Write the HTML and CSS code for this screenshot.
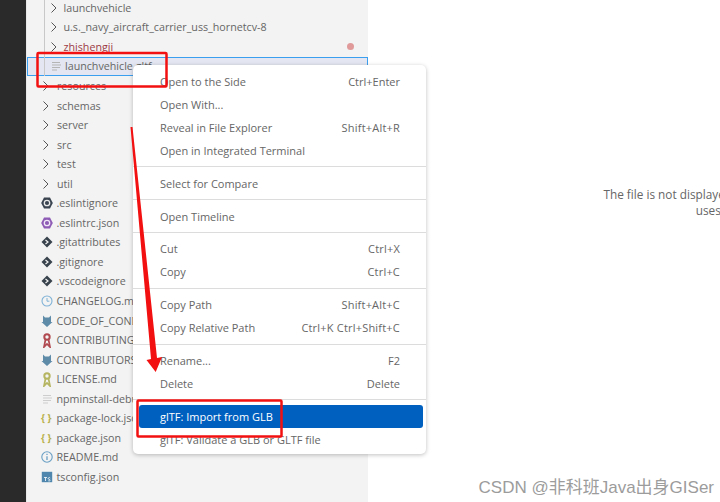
FILE: index.html
```html
<!DOCTYPE html>
<html lang="en">
<head>
<meta charset="utf-8">
<title>Explorer context menu</title>
<link rel="stylesheet" href="styles.css">
</head>
<body>
<div class="app">
  <div class="activity"></div>
  <aside class="side">
    <ul class="tree">
      <li class="row l2"><svg class="chev" viewBox="0 0 10 10"><path d="M2.500 .5l4.500 4.500-4.500 4.500"/></svg>launchvehicle</li>
      <li class="row l2"><svg class="chev" viewBox="0 0 10 10"><path d="M2.500 .5l4.500 4.500-4.500 4.500"/></svg>u.s._navy_aircraft_carrier_uss_hornetcv-8</li>
      <li class="row l2 err"><svg class="chev" viewBox="0 0 10 10"><path d="M2.500 .5l4.500 4.500-4.500 4.500"/></svg>zhishengji<span class="dot"></span></li>
      <li class="row l2 sel"><svg class="ic" viewBox="0 0 12 12"><path d="M1 2.500h8M1 5h9M1 7.500h8M1 10h5" stroke="#b5b5b5" fill="none"/></svg>launchvehicle.gltf</li>
      <li class="row"><svg class="chev" viewBox="0 0 10 10"><path d="M2.500 .5l4.500 4.500-4.500 4.500"/></svg>resources</li>
      <li class="row"><svg class="chev" viewBox="0 0 10 10"><path d="M2.500 .5l4.500 4.500-4.500 4.500"/></svg>schemas</li>
      <li class="row"><svg class="chev" viewBox="0 0 10 10"><path d="M2.500 .5l4.500 4.500-4.500 4.500"/></svg>server</li>
      <li class="row"><svg class="chev" viewBox="0 0 10 10"><path d="M2.500 .5l4.500 4.500-4.500 4.500"/></svg>src</li>
      <li class="row"><svg class="chev" viewBox="0 0 10 10"><path d="M2.500 .5l4.500 4.500-4.500 4.500"/></svg>test</li>
      <li class="row"><svg class="chev" viewBox="0 0 10 10"><path d="M2.500 .5l4.500 4.500-4.500 4.500"/></svg>util</li>
      <li class="row"><svg class="ic" viewBox="0 0 12 12"><path d="M3 .4h6L11.800 6 9 11.600H3L.2 6z" fill="#3a4450"/><circle cx="6" cy="6" r="2.700" fill="none" stroke="#e8e8e8" stroke-width="1.300"/></svg>.eslintignore</li>
      <li class="row"><svg class="ic" viewBox="0 0 12 12"><path d="M3 .4h6L11.800 6 9 11.600H3L.2 6z" fill="#8e5bb5"/><circle cx="6" cy="6" r="2.700" fill="none" stroke="#f0e8f6" stroke-width="1.300"/></svg>.eslintrc.json</li>
      <li class="row"><svg class="ic" viewBox="0 0 12 12"><path d="M6 .5L11.500 6 6 11.500 .5 6z" fill="#38424c"/><path d="M4.500 4L7 6 4.500 8" stroke="#f3f3f3" stroke-width="1.200" fill="none"/></svg>.gitattributes</li>
      <li class="row"><svg class="ic" viewBox="0 0 12 12"><path d="M6 .5L11.500 6 6 11.500 .5 6z" fill="#38424c"/><path d="M4.500 4L7 6 4.500 8" stroke="#f3f3f3" stroke-width="1.200" fill="none"/></svg>.gitignore</li>
      <li class="row"><svg class="ic" viewBox="0 0 12 12"><path d="M6 .5L11.500 6 6 11.500 .5 6z" fill="#38424c"/><path d="M4.500 4L7 6 4.500 8" stroke="#f3f3f3" stroke-width="1.200" fill="none"/></svg>.vscodeignore</li>
      <li class="row"><svg class="ic" viewBox="0 0 12 12"><circle cx="6" cy="6" r="5" fill="none" stroke="#7fb2d6" stroke-width="1.100"/><path d="M6 3v3.200h2.400" fill="none" stroke="#7fb2d6"/></svg>CHANGELOG.md</li>
      <li class="row"><svg class="ic" viewBox="0 0 12 12"><path d="M2 .5l2 2h4l2-2v6.500h1.500L6 12 .5 7H2z" fill="#5d8ba8"/></svg>CODE_OF_CONDUCT.md</li>
      <li class="row"><svg class="ic tall" viewBox="0 0 12 15"><circle cx="6" cy="4" r="2.700" fill="none" stroke="#b04a50" stroke-width="2"/><path d="M4.500 6.500L3 14l3-3 3 3-1.500-7.500" fill="none" stroke="#b04a50" stroke-width="1.700"/></svg>CONTRIBUTING.md</li>
      <li class="row"><svg class="ic" viewBox="0 0 12 12"><path d="M2 .5l2 2h4l2-2v6.500h1.500L6 12 .5 7H2z" fill="#5d8ba8"/></svg>CONTRIBUTORS.md</li>
      <li class="row"><svg class="ic tall" viewBox="0 0 12 15"><circle cx="6" cy="4" r="2.700" fill="none" stroke="#b5b561" stroke-width="2"/><path d="M4.500 6.500L3 14l3-3 3 3-1.500-7.500" fill="none" stroke="#b5b561" stroke-width="1.700"/></svg>LICENSE.md</li>
      <li class="row"><svg class="ic" viewBox="0 0 12 12"><path d="M2 2.500h8M2 5h9M2 7.500h8M2 10h5" stroke="#cdcdcd" fill="none"/></svg>npminstall-debug.log</li>
      <li class="row"><span class="brace">{ }</span>package-lock.json</li>
      <li class="row"><span class="brace">{ }</span>package.json</li>
      <li class="row"><svg class="ic" viewBox="0 0 12 12"><circle cx="6" cy="6" r="5.200" fill="none" stroke="#6a9fc4" stroke-width="1.100"/><path d="M6 2.800v1.300M6 5.200v3.800" stroke="#6a9fc4" stroke-width="1.300"/></svg>README.md</li>
      <li class="row"><svg class="ic" viewBox="0 0 12 12"><rect x=".8" y=".8" width="10.400" height="10.400" fill="#4e86ad"/><path d="M3 6.500h3M4.500 6.500V10M9.200 7a1.100 1 0 0 0-2 .5c0 1.100 2 .7 2 1.700a1.100 1 0 0 1-2 .3" stroke="#fff" stroke-width=".8" fill="none"/></svg>tsconfig.json</li>
    </ul>
  </aside>
  <main class="editor">
    <p class="msg">The file is not displayed in the text editor because it is either binary or<br>uses an unsupported text encoding.</p>
  </main>
</div>

<div class="menu">
  <div class="mi"><span>Open to the Side</span><span>Ctrl+Enter</span></div>
  <div class="mi"><span>Open With...</span></div>
  <div class="mi"><span>Reveal in File Explorer</span><span class="key">Shift+Alt+R</span></div>
  <div class="mi"><span>Open in Integrated Terminal</span></div>
  <div class="sep"></div>
  <div class="mi"><span>Select for Compare</span></div>
  <div class="sep"></div>
  <div class="mi"><span>Open Timeline</span></div>
  <div class="sep"></div>
  <div class="mi"><span>Cut</span><span class="key">Ctrl+X</span></div>
  <div class="mi"><span>Copy</span><span class="key">Ctrl+C</span></div>
  <div class="sep"></div>
  <div class="mi"><span>Copy Path</span><span class="key">Shift+Alt+C</span></div>
  <div class="mi"><span>Copy Relative Path</span><span class="key">Ctrl+K Ctrl+Shift+C</span></div>
  <div class="sep"></div>
  <div class="mi"><span>Rename...</span><span>F2</span></div>
  <div class="mi"><span>Delete</span><span>Delete</span></div>
  <div class="sep"></div>
  <div class="mi on"><span>glTF: Import from GLB</span></div>
  <div class="mi"><span>glTF: Validate a GLB or GLTF file</span></div>
</div>

<svg class="marks" viewBox="0 0 720 502">
  <rect x="37.500" y="53" width="129" height="33.500" rx="1" class="box"/>
  <rect x="137.500" y="400.500" width="144" height="36" rx="1" class="box"/>
  <path d="M130.500 127L132.500 127L157 358L162 357L155.700 372L146.500 360L151 359z" class="head"/>
</svg>

<div class="wm">CSDN @非科班Java出身GISer</div>
</body>
</html>
```
FILE: styles.css
```css
* { box-sizing: border-box; }
html, body { margin: 0; height: 100%; overflow: hidden; background: #fff; }
body { font-family: "Open Sans", "Noto Sans CJK SC", sans-serif; font-size: 11px; color: #666; }
.app { display: flex; height: 502px; }
.activity { width: 26px; background: #2a2a2a; }
.side { width: 342px; flex: none; background: #f3f3f3; border-left: 1px solid #e8e8e8; overflow: hidden; font-size: 10.7px; }
.tree { list-style: none; margin: -2px 0 0; padding: 0; position: relative; }
.row { height: 19.55px; display: flex; align-items: center; padding-left: 16px; white-space: nowrap; position: relative; }
.row > .chev { margin-left: -2px; margin-right: 6px; }
.l2 { padding-left: 23.500px; }
.l2 > .chev { margin-right: 5px; }
.l2::before { content: ""; position: absolute; left: 17px; top: 0; bottom: 0; width: 1px; background: #c8c8c8; }
.chev { width: 10px; height: 10px; flex: none; }
.chev path { fill: none; stroke: #555; stroke-width: 1; }
.ic { width: 12px; height: 12px; margin-right: 3.500px; margin-left: -2px; flex: none; }
.tall { height: 15px; }
.l2 .ic { margin-right: 2.500px; margin-left: 0; }
.brace { width: 13px; margin-right: 2.500px; margin-left: -2px; color: #b8b04a; font-weight: 700; font-size: 10px; flex: none; }
.err { color: #9c3a45; }
.dot { position: absolute; right: 14px; top: 6px; width: 7px; height: 7px; border-radius: 50%; background: #e09a9a; }
.sel { background: #e4e6f1; outline: 1px solid #3b9ff0; outline-offset: -1px; }
.editor { flex: 1; overflow: hidden; padding: 186px 0 0 235px; }
.msg { width: 383px; margin: 0; text-align: center; font-size: 11.800px; line-height: 16px; white-space: nowrap; }
.menu { position: absolute; left: 133px; top: 65px; width: 293px; height: 389px; padding: 5px 3px 2px 6px; background: #fff; border-radius: 5px; box-shadow: 0 1px 4px rgba(0,0,0,.25); }
.mi { height: 23px; display: flex; justify-content: space-between; align-items: center; padding: 0 23px 0 21px; white-space: nowrap; border-radius: 3px; }
.key { letter-spacing: .2px; }
.sep { height: 1px; margin: 4.400px -3px 4.400px -6px; background: #dcdcdc; }
.on { background: #0060c0; color: #fff; }
.marks { position: absolute; left: 0; top: 0; width: 720px; height: 502px; pointer-events: none; }
.box { fill: none; stroke: #f21010; stroke-width: 2.500; }
.head { fill: #f21010; }
.wm { position: absolute; right: 6px; bottom: 4px; font-family: "Liberation Sans", "Noto Sans CJK SC", sans-serif; font-size: 17px; color: #9c9c9c; }
```
